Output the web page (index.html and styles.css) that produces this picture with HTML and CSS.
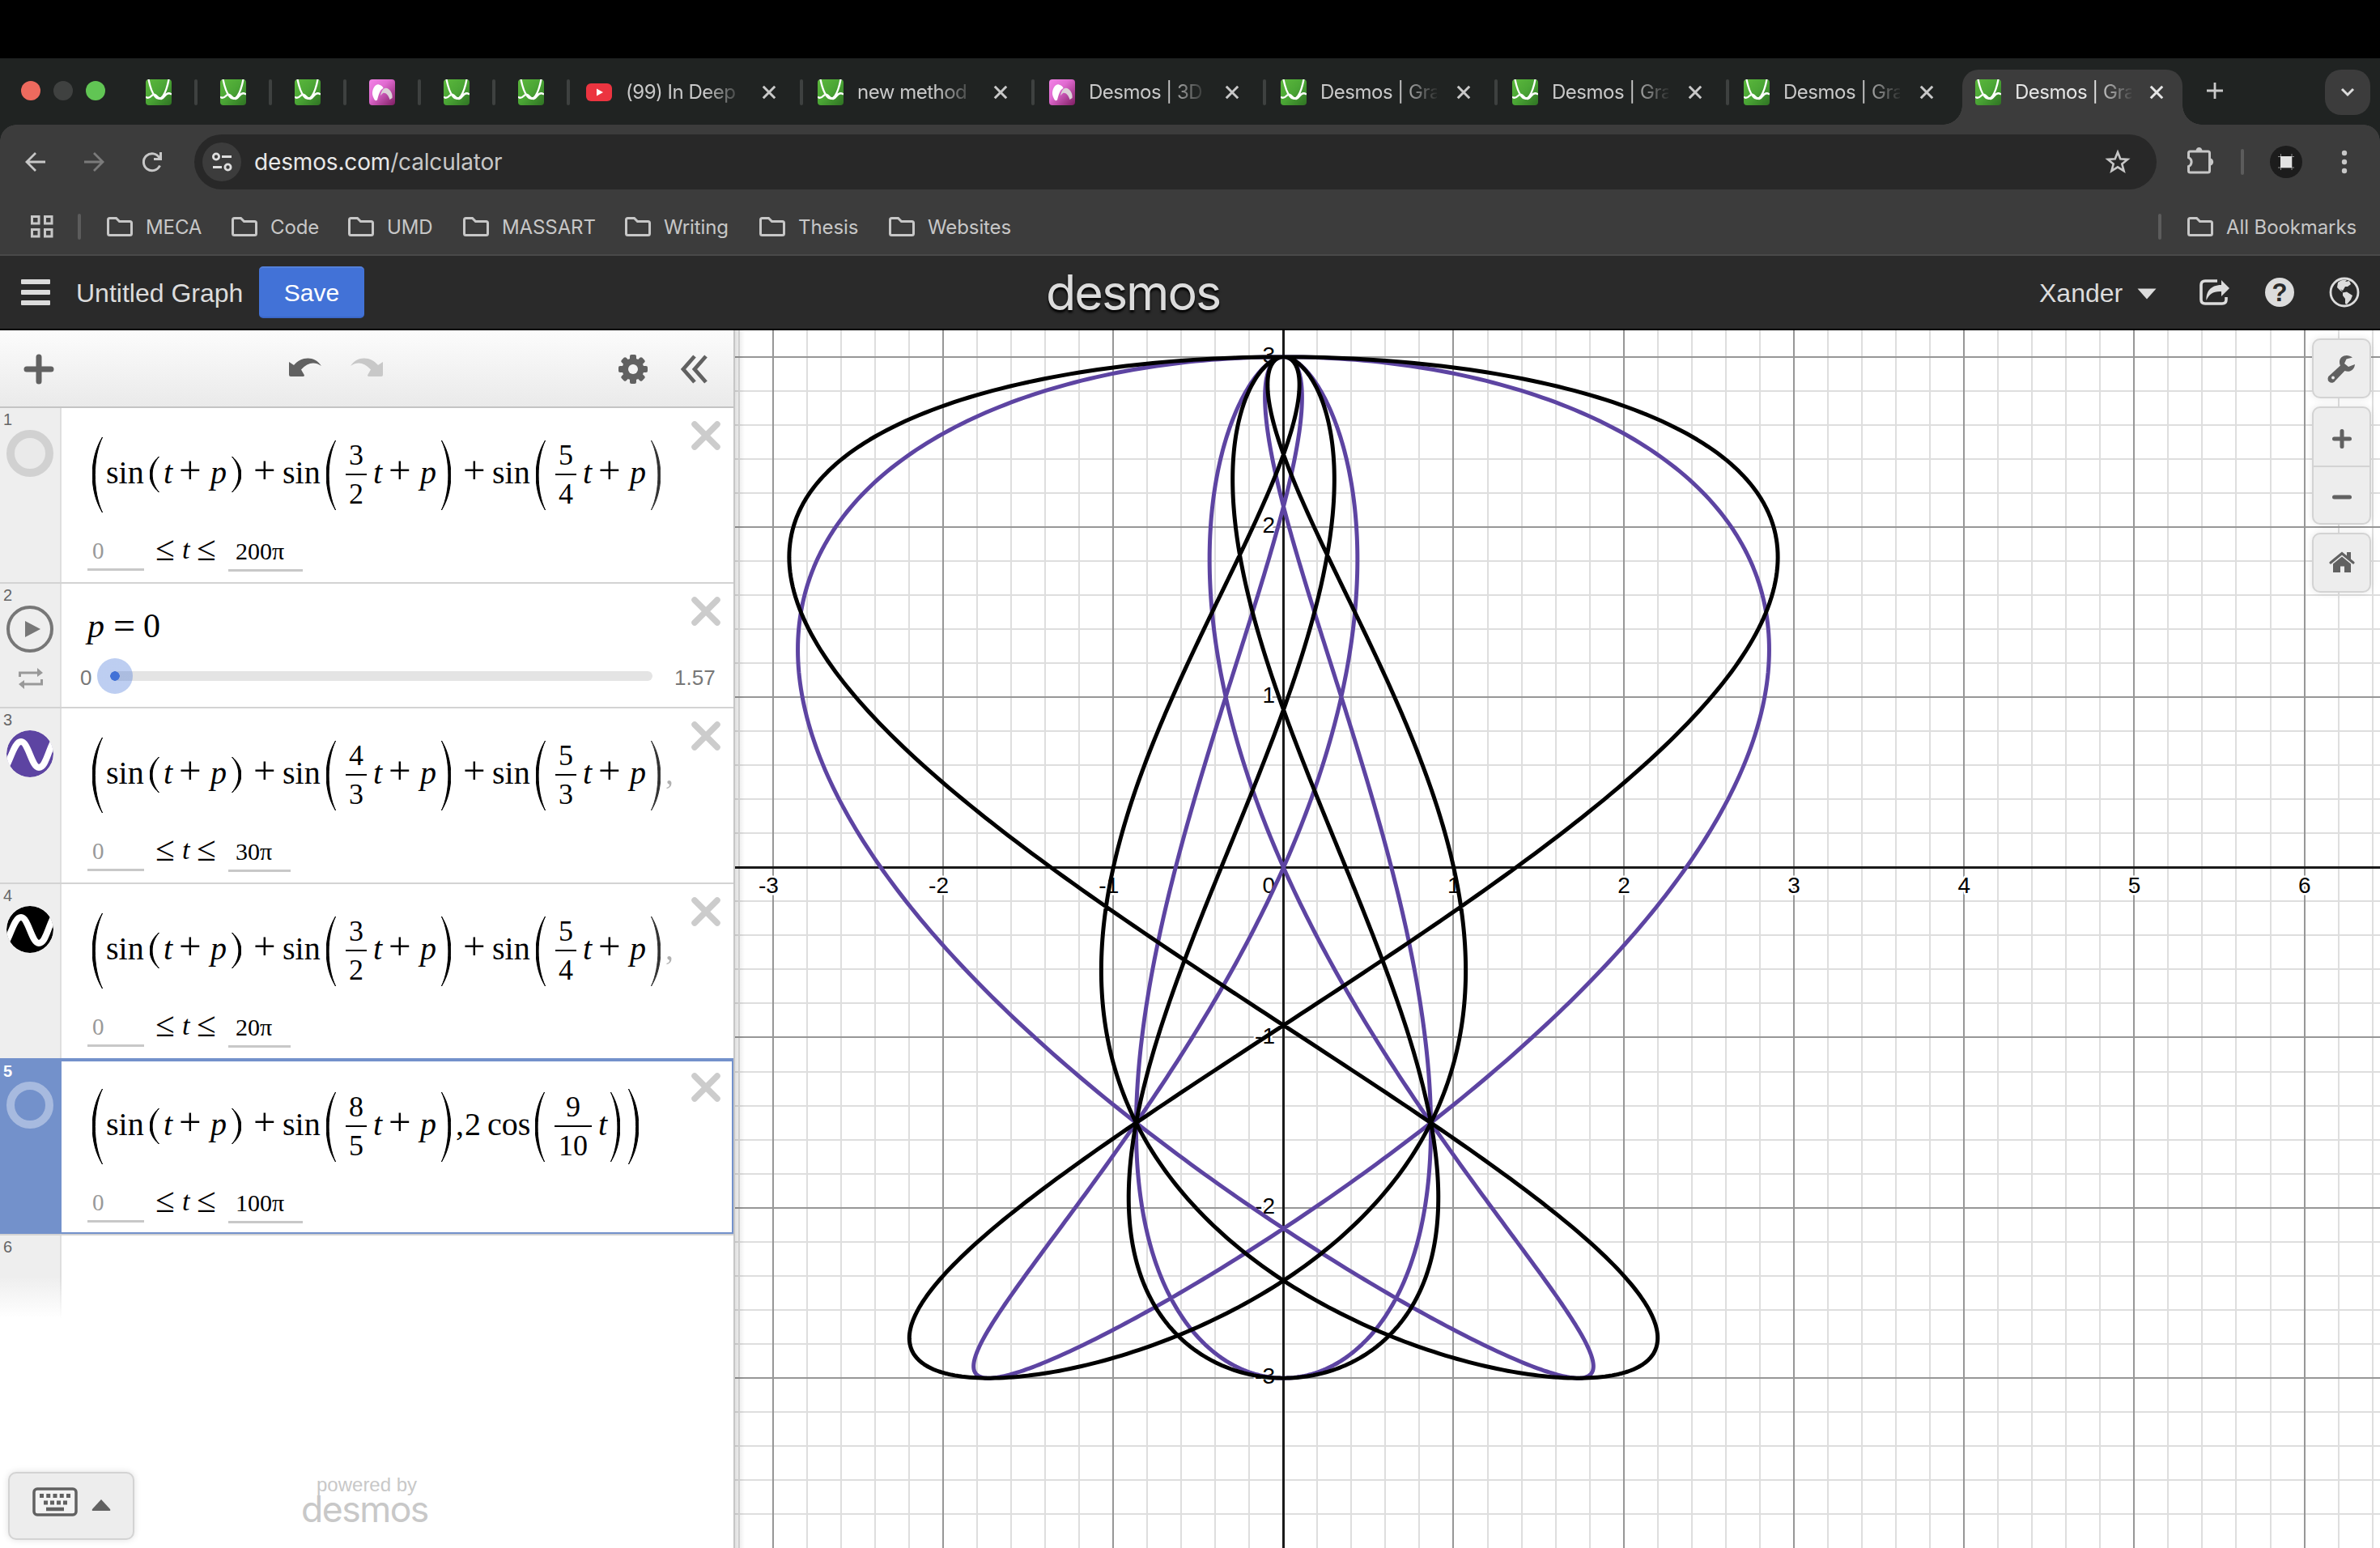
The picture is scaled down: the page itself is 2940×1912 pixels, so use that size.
FILE: index.html
```html
<!DOCTYPE html>
<html lang="en">
<head>
<meta charset="utf-8">
<title>Desmos | Graphing Calculator</title>
<link rel="stylesheet" href="styles.css">
</head>
<body>
<svg class="defs" width="0" height="0" aria-hidden="true">
  <defs>
    <linearGradient id="green" x1="0" y1="0" x2="1" y2="1"><stop offset="0" stop-color="#5cb83c"/><stop offset=".5" stop-color="#4aa535"/><stop offset="1" stop-color="#2f7223"/></linearGradient>
    <linearGradient id="pink" x1="0" y1="0" x2="1" y2="1"><stop offset="0" stop-color="#f283e6"/><stop offset=".4" stop-color="#e06ad0"/><stop offset="1" stop-color="#7e1d62"/></linearGradient>
    <symbol id="fav-graph" viewBox="0 0 32 32"><rect width="32" height="32" rx="4" fill="url(#green)"/><path d="M3.500 0C5.500 10 8 17 11.500 21C14.500 25 18.500 25 21.500 20.500C25 15 27 8 28.500 0M0 21.500C2 23.500 4.500 23 7 20.500C9.500 17.500 11.500 18 14.500 21.500C18 25.500 20.500 24.500 23.500 20.500C26 17 29 16.500 32 18.500" fill="none" stroke="#fff" stroke-width="2.300"/></symbol>
    <symbol id="fav-3d" viewBox="0 0 32 32"><rect width="32" height="32" rx="4" fill="url(#pink)"/><path d="M14 20C16 11 20 9 24 12C28 15 29 20 28.500 23L25.500 25C23.500 19 20.500 16 17 17Z" fill="#dcd3d8"/><path d="M4 16C5 9 9 5.500 12 6.500C15 7 17 9 17.500 11C13 13 11.500 20 10 25.500C9 26.500 7.500 26.500 6.500 25C5 22 3.600 19 4 16Z" fill="#fff"/></symbol>
    <symbol id="fav-yt" viewBox="0 0 32 22"><rect width="32" height="22" rx="6" fill="#ec3440"/><path d="M13 6.500L21 11L13 15.500Z" fill="#fff"/></symbol>
    <symbol id="i-x" viewBox="0 0 18 18"><path d="M1.800 1.800L16.200 16.200M16.200 1.800L1.800 16.200" fill="none" stroke="currentColor" stroke-width="3"/></symbol>
    <symbol id="i-folder" viewBox="0 0 32 24"><path d="M1.500 3.500Q1.500 1.500 3.500 1.500H11.500L15.500 5.500H28.500Q30.500 5.500 30.500 7.500V20.500Q30.500 22.500 28.500 22.500H3.500Q1.500 22.500 1.500 20.500Z" fill="none" stroke="currentColor" stroke-width="3"/></symbol>
    <symbol id="i-del" viewBox="0 0 36 36"><path d="M4 4L32 32M32 4L4 32" fill="none" stroke="#ccc" stroke-width="7.500" stroke-linecap="round"/></symbol>
    <symbol id="i-wave" viewBox="0 0 58 58"><clipPath id="disc"><circle cx="29" cy="29" r="29"/></clipPath><g clip-path="url(#disc)"><circle cx="29" cy="29" r="29" fill="currentColor"/><path d="M-1 46C6 34 10 14 18 14C27 14 31 46 40 46C48 46 50 30 58 14" fill="none" stroke="#fff" stroke-width="8"/></g></symbol>
    <symbol id="p-open" viewBox="0 0 13 100" preserveAspectRatio="none"><path d="M12.500 0C-4 28 -4 72 12.500 100C.300 72 .300 28 12.500 0Z" fill="#000" stroke="#000" stroke-width="1" vector-effect="non-scaling-stroke"/></symbol>
    <symbol id="p-close" viewBox="0 0 13 100" preserveAspectRatio="none"><path d="M.500 0C17 28 17 72 .500 100C12.700 72 12.700 28 .500 0Z" fill="#000" stroke="#000" stroke-width="1" vector-effect="non-scaling-stroke"/></symbol>
  </defs>
</svg>

<div class="notch"></div>
<div class="tabstrip">
  <div class="lights"><i class="red"></i><i class="grey"></i><i class="green"></i></div>
  <div class="pinned"><svg class="fav"><use href="#fav-graph"/></svg></div>
  <div class="pinned"><svg class="fav"><use href="#fav-graph"/></svg></div>
  <div class="pinned"><svg class="fav"><use href="#fav-graph"/></svg></div>
  <div class="pinned"><svg class="fav"><use href="#fav-3d"/></svg></div>
  <div class="pinned"><svg class="fav"><use href="#fav-graph"/></svg></div>
  <div class="pinned"><svg class="fav"><use href="#fav-graph"/></svg></div>
  <div class="tab"><svg class="fav"><use href="#fav-yt"/></svg><span class="name">(99) In Deep</span><svg class="x"><use href="#i-x"/></svg></div>
  <div class="tab"><svg class="fav"><use href="#fav-graph"/></svg><span class="name">new method</span><svg class="x"><use href="#i-x"/></svg></div>
  <div class="tab"><svg class="fav"><use href="#fav-3d"/></svg><span class="name">Desmos | 3D</span><svg class="x"><use href="#i-x"/></svg></div>
  <div class="tab"><svg class="fav"><use href="#fav-graph"/></svg><span class="name">Desmos | Gra</span><svg class="x"><use href="#i-x"/></svg></div>
  <div class="tab"><svg class="fav"><use href="#fav-graph"/></svg><span class="name">Desmos | Gra</span><svg class="x"><use href="#i-x"/></svg></div>
  <div class="tab last"><svg class="fav"><use href="#fav-graph"/></svg><span class="name">Desmos | Gra</span><svg class="x"><use href="#i-x"/></svg></div>
  <div class="tab active"><svg class="fav"><use href="#fav-graph"/></svg><span class="name">Desmos | Gra</span><svg class="x"><use href="#i-x"/></svg></div>
  <svg class="newtab" viewBox="0 0 20 20"><path d="M10 0V20M0 10H20" stroke="#c9c9c9" stroke-width="2.800"/></svg>
  <div class="tabmenu"><svg width="18" height="12" viewBox="0 0 18 12"><path d="M2 2L9 9L16 2" fill="none" stroke="#dcdcdc" stroke-width="3"/></svg></div>
</div>

<div class="chrome">
  <div class="toolbar">
    <svg class="nav" viewBox="0 0 28 28"><path d="M26 14H3M14 3L3 14L14 25" fill="none" stroke="#c7c7c7" stroke-width="2.800"/></svg>
    <svg class="nav" viewBox="0 0 28 28"><path d="M2 14H25M14 3L25 14L14 25" fill="none" stroke="#7b7b7b" stroke-width="2.800"/></svg>
    <svg class="nav" viewBox="0 0 28 28"><path d="M23.500 18.500A10.500 10.500 0 1 1 23 9M24.500 2V10.500H16" fill="none" stroke="#c7c7c7" stroke-width="3"/></svg>
    <div class="omnibox">
      <div class="tune"><svg width="26" height="24" viewBox="0 0 26 24"><g fill="none" stroke="#dedede" stroke-width="2.800"><circle cx="6" cy="5.500" r="3.600"/><path d="M13 5.500H25M2 18.500H13"/><circle cx="20.500" cy="18.500" r="3.600"/></g></svg></div>
      <div class="url"><b>desmos.com</b>/calculator</div>
      <svg class="star" viewBox="0 0 32 32"><path d="M16 4L19.300 12.300L28.200 12.900L21.300 18.500L23.600 27.200L16 22.400L8.400 27.200L10.700 18.500L3.800 12.900L12.700 12.300Z" fill="none" stroke="#c7c7c7" stroke-width="2.600"/></svg>
    </div>
    <svg class="puzzle" viewBox="0 0 34 34"><path d="M4.500 6H26.500Q28.500 6 28.500 8V30Q28.500 32 26.500 32H4.500Q2.500 32 2.500 30V24.500A6 6 0 0 0 2.500 13.500V8Q2.500 6 4.500 6Z" fill="none" stroke="#c7c7c7" stroke-width="3"/><path d="M11.500 5.500A4 4.500 0 0 1 19.500 5.500ZM29 14.500A4 4.300 0 0 1 29 23.500Z" fill="#c7c7c7"/></svg>
    <i class="sep s1"></i>
    <svg class="avatar" viewBox="0 0 40 40"><circle cx="20" cy="20" r="20" fill="#1c1c1c"/><path d="M10 13.500H30M10 27H30M13.500 10V30M27 10V30" stroke="#8d8d8d" stroke-width="1"/><rect x="13" y="13" width="14" height="14" fill="#e2e2e2"/></svg>
    <svg class="dots" viewBox="0 0 8 30"><g fill="#c7c7c7"><circle cx="4" cy="4" r="3.200"/><circle cx="4" cy="15" r="3.200"/><circle cx="4" cy="26" r="3.200"/></g></svg>
  </div>
  <div class="bookmarks">
    <svg class="apps" viewBox="0 0 28 28"><g fill="none" stroke="#c7c7c7" stroke-width="3"><rect x="1.500" y="1.500" width="8.500" height="8.500"/><rect x="17.500" y="1.500" width="8.500" height="8.500"/><rect x="1.500" y="17.500" width="8.500" height="8.500"/><rect x="17.500" y="17.500" width="8.500" height="8.500"/></g></svg>
    <i class="sep s2"></i>
    <div class="bm w1"><svg><use href="#i-folder"/></svg><span>MECA</span></div>
    <div class="bm w2"><svg><use href="#i-folder"/></svg><span>Code</span></div>
    <div class="bm w3"><svg><use href="#i-folder"/></svg><span>UMD</span></div>
    <div class="bm w4"><svg><use href="#i-folder"/></svg><span>MASSART</span></div>
    <div class="bm w5"><svg><use href="#i-folder"/></svg><span>Writing</span></div>
    <div class="bm w6"><svg><use href="#i-folder"/></svg><span>Thesis</span></div>
    <div class="bm w7"><svg><use href="#i-folder"/></svg><span>Websites</span></div>
    <i class="sep s3"></i>
    <div class="bm all"><svg><use href="#i-folder"/></svg><span>All Bookmarks</span></div>
  </div>
</div>

<header class="header">
  <div class="menu"><i></i><i></i><i></i></div>
  <div class="title">Untitled Graph</div>
  <div class="save">Save</div>
  <div class="logo">desmos</div>
  <div class="user">Xander</div>
  <svg class="caret" viewBox="0 0 24 14"><path d="M.5 .5H23.500L12 13.500Z" fill="#dcdcdc"/></svg>
  <svg class="share" viewBox="0 0 38 32"><path d="M22 2H7Q2 2 2 7V25Q2 30 7 30H28Q33 30 33 25V22" fill="none" stroke="#dcdcdc" stroke-width="3.600"/><path d="M27 1L37 11L27 21V15C17 14.500 12 18 8.500 26C8 16 13 7 27 7Z" fill="#dcdcdc"/></svg>
  <div class="help">?</div>
  <svg class="globe" viewBox="0 0 38 38"><circle cx="19" cy="19" r="17" fill="none" stroke="#dcdcdc" stroke-width="2.800"/><path d="M11 7C14 4 18 3 22 4L20 6L25 5L27 9L23 12L20 12L17 17L14 15L17 19L14 17L10 13Z" fill="#dcdcdc"/><path d="M17 19.500L22 18.500L29 23L27 28L22 34L20 33L20 27L17 23Z" fill="#dcdcdc"/></svg>
</header>

<main class="app">
  <aside class="panel">
    <div class="ptools">
      <svg class="add" viewBox="0 0 36 36"><path d="M18 3V33M3 18H33" stroke="#616161" stroke-width="7" stroke-linecap="round"/></svg>
      <svg class="undo" viewBox="0 0 42 24"><path d="M1 5L7 9C15 -1 32 -4 41 10C32 4 24 6 16 14.500L20 21.500Q20 23 18 23H3Q1 23 1 21Z" fill="#616161"/></svg>
      <svg class="redo" viewBox="0 0 42 24"><path d="M41 5L35 9C27 -1 10 -4 1 10C10 4 18 6 26 14.500L22 21.500Q22 23 24 23H39Q41 23 41 21Z" fill="#c8c8c8"/></svg>
      <svg class="gear" viewBox="-18 -18 36 36"><g fill="#616161"><rect x="-4" y="-18" width="8" height="36" rx="2"/><rect x="-4" y="-18" width="8" height="36" rx="2" transform="rotate(45)"/><rect x="-4" y="-18" width="8" height="36" rx="2" transform="rotate(90)"/><rect x="-4" y="-18" width="8" height="36" rx="2" transform="rotate(135)"/><circle r="13.500"/></g><circle r="6" fill="#f3f3f3"/></svg>
      <svg class="hide" viewBox="0 0 34 36"><path d="M17 2L3 18L17 34M31 2L17 18L31 34" fill="none" stroke="#616161" stroke-width="4.800"/></svg>
    </div>

    <div class="row">
      <div class="gutter"><span class="num">1</span><div class="ring"></div></div>
      <div class="cell">
        <svg class="del"><use href="#i-del"/></svg>
        <div class="math">
          <svg class="par big"><use href="#p-open"/></svg><span class="fn">sin</span><svg class="par sm"><use href="#p-open"/></svg><i class="t">t</i><span class="op">+</span><i class="p">p</i><svg class="par sm c"><use href="#p-close"/></svg><span class="op out">+</span><span class="fn f2">sin</span><svg class="par md"><use href="#p-open"/></svg><span class="frac"><span>3</span><span>2</span></span><i class="t ft">t</i><span class="op">+</span><i class="p">p</i><svg class="par md c"><use href="#p-close"/></svg><span class="op out">+</span><span class="fn f2">sin</span><svg class="par md"><use href="#p-open"/></svg><span class="frac"><span>5</span><span>4</span></span><i class="t ft">t</i><span class="op">+</span><i class="p">p</i><svg class="par md c fade"><use href="#p-close"/></svg>
        </div>
        <div class="range"><span class="lo">0</span><span class="le">≤</span><i>t</i><span class="le">≤</span><span class="hi">200π</span></div>
      </div>
    </div>

    <div class="row slider-row">
      <div class="gutter"><span class="num">2</span>
        <svg class="play" viewBox="0 0 58 58"><circle cx="29" cy="29" r="27" fill="none" stroke="#777" stroke-width="4"/><path d="M23 19L42 29L23 39Z" fill="#777"/></svg>
        <svg class="loop" viewBox="0 0 30 26"><path d="M1.500 11V6H24M28.500 14V20H6" fill="none" stroke="#999" stroke-width="3"/><path d="M23 0L30 6L23 11ZM7 15L0 20L7 26Z" fill="#999"/></svg>
      </div>
      <div class="cell">
        <svg class="del"><use href="#i-del"/></svg>
        <div class="assign"><i>p</i><span class="eq">=</span><span>0</span></div>
        <div class="slider"><span class="min">0</span><div class="track"><div class="thumb"></div></div><span class="max">1.57</span></div>
      </div>
    </div>

    <div class="row">
      <div class="gutter"><span class="num">3</span><svg class="wave purple"><use href="#i-wave"/></svg></div>
      <div class="cell">
        <svg class="del"><use href="#i-del"/></svg>
        <div class="math">
          <svg class="par big"><use href="#p-open"/></svg><span class="fn">sin</span><svg class="par sm"><use href="#p-open"/></svg><i class="t">t</i><span class="op">+</span><i class="p">p</i><svg class="par sm c"><use href="#p-close"/></svg><span class="op out">+</span><span class="fn f2">sin</span><svg class="par md"><use href="#p-open"/></svg><span class="frac"><span>4</span><span>3</span></span><i class="t ft">t</i><span class="op">+</span><i class="p">p</i><svg class="par md c"><use href="#p-close"/></svg><span class="op out">+</span><span class="fn f2">sin</span><svg class="par md"><use href="#p-open"/></svg><span class="frac"><span>5</span><span>3</span></span><i class="t ft">t</i><span class="op">+</span><i class="p">p</i><svg class="par md c fade"><use href="#p-close"/></svg><span class="comma faint">,</span>
        </div>
        <div class="range"><span class="lo">0</span><span class="le">≤</span><i>t</i><span class="le">≤</span><span class="hi">30π</span></div>
      </div>
    </div>

    <div class="row noline">
      <div class="gutter"><span class="num">4</span><svg class="wave black"><use href="#i-wave"/></svg></div>
      <div class="cell">
        <svg class="del"><use href="#i-del"/></svg>
        <div class="math">
          <svg class="par big"><use href="#p-open"/></svg><span class="fn">sin</span><svg class="par sm"><use href="#p-open"/></svg><i class="t">t</i><span class="op">+</span><i class="p">p</i><svg class="par sm c"><use href="#p-close"/></svg><span class="op out">+</span><span class="fn f2">sin</span><svg class="par md"><use href="#p-open"/></svg><span class="frac"><span>3</span><span>2</span></span><i class="t ft">t</i><span class="op">+</span><i class="p">p</i><svg class="par md c"><use href="#p-close"/></svg><span class="op out">+</span><span class="fn f2">sin</span><svg class="par md"><use href="#p-open"/></svg><span class="frac"><span>5</span><span>4</span></span><i class="t ft">t</i><span class="op">+</span><i class="p">p</i><svg class="par md c fade"><use href="#p-close"/></svg><span class="comma faint">,</span>
        </div>
        <div class="range"><span class="lo">0</span><span class="le">≤</span><i>t</i><span class="le">≤</span><span class="hi">20π</span></div>
      </div>
    </div>

    <div class="row selected">
      <div class="gutter"><span class="num">5</span><div class="ring"></div></div>
      <div class="cell">
        <svg class="del"><use href="#i-del"/></svg>
        <div class="math">
          <svg class="par big"><use href="#p-open"/></svg><span class="fn">sin</span><svg class="par sm"><use href="#p-open"/></svg><i class="t">t</i><span class="op">+</span><i class="p">p</i><svg class="par sm c"><use href="#p-close"/></svg><span class="op out">+</span><span class="fn f2">sin</span><svg class="par md"><use href="#p-open"/></svg><span class="frac"><span>8</span><span>5</span></span><i class="t ft">t</i><span class="op">+</span><i class="p">p</i><svg class="par md c"><use href="#p-close"/></svg><span class="comma">,</span><span class="two">2</span><span class="cos">cos</span><svg class="par md"><use href="#p-open"/></svg><span class="frac wide"><span>9</span><span>10</span></span><i class="t ft">t</i><svg class="par md c2"><use href="#p-close"/></svg><svg class="par big"><use href="#p-close"/></svg>
        </div>
        <div class="range"><span class="lo">0</span><span class="le">≤</span><i>t</i><span class="le">≤</span><span class="hi">100π</span></div>
      </div>
    </div>

    <div class="row empty"><div class="gutter"><span class="num">6</span></div></div>

    <div class="pfoot">
      <div class="keypad">
        <svg width="56" height="36" viewBox="0 0 56 36"><rect x="2" y="2" width="52" height="32" rx="4" fill="#f3f3f3" stroke="#616161" stroke-width="3.500"/><path d="M9 10.500H47" stroke="#616161" stroke-width="5" stroke-dasharray="5 3.250"/><path d="M14 19H43" stroke="#616161" stroke-width="5" stroke-dasharray="5 3"/><path d="M17 27H39" stroke="#616161" stroke-width="4.500"/></svg>
        <svg class="up" width="24" height="14" viewBox="0 0 24 14"><path d="M12 0L23 12Q24 14 22 14H2Q0 14 1 12Z" fill="#616161"/></svg>
      </div>
      <div class="powered"><span>powered by</span><span class="mini">desmos</span></div>
    </div>
  </aside>

  <section class="graph">
    <svg id="plot" width="2032" height="1504" viewBox="908 408 2032 1504"></svg>
    <div class="controls">
      <div class="btn"><svg width="34" height="34" viewBox="0 0 34 34"><path d="M30 3.500C24 -1.500 14 1 14 9C14 11 14.500 12.500 15 13.500L2 25.500A5 5 0 1 0 9 32L20.500 20C26 22.500 32.500 19 33 12L25 15L20 11L22.500 5.500Z" fill="#616161"/><circle cx="6" cy="28.500" r="1.900" fill="#ededed"/></svg></div>
      <div class="zoom">
        <div><svg width="24" height="24" viewBox="0 0 24 24"><path d="M12 2.500V21.500M2.500 12H21.500" stroke="#616161" stroke-width="5" stroke-linecap="round"/></svg></div>
        <div><svg width="24" height="24" viewBox="0 0 24 24"><path d="M2.500 12H21.500" stroke="#616161" stroke-width="5" stroke-linecap="round"/></svg></div>
      </div>
      <div class="btn"><svg width="32" height="28" viewBox="0 0 32 28"><path d="M2 14L16 2.500L30 14" fill="none" stroke="#616161" stroke-width="3.200" stroke-linecap="round"/><path d="M22 1H27V11L22 6.500ZM16 6.500L27 15.500V26H19V18.500H14V26H5V15.500Z" fill="#616161"/></svg></div>
    </div>
  </section>
</main>
<script src="app.js"></script>
</body>
</html>
```
FILE: styles.css
```css
* { box-sizing: border-box; }
body { margin: 0; width: 2940px; height: 1912px; overflow: hidden; background: #fff; font-family: Inter, "Liberation Sans", sans-serif; display: flex; flex-direction: column; }
svg { display: block; flex: none; overflow: visible; }
.defs { position: absolute; }
.notch { height: 72px; background: #000; flex: none; }

.tabstrip { height: 82px; flex: none; background: #202322; display: flex; align-items: flex-start; padding: 14px 12px 0 26px; }
.lights { display: flex; gap: 16px; width: 154px; height: 56px; align-items: center; }
.lights i { width: 24px; height: 24px; border-radius: 50%; margin-top: -4px; }
.lights .red { background: #ed6a5e; }
.lights .grey { background: #3f4140; }
.lights .green { background: #61c554; }
.fav { width: 32px; height: 32px; }
.pinned, .tab { position: relative; display: flex; align-items: center; height: 32px; margin-top: 12px; }
.pinned { width: 92px; }
.pinned::after, .tab::after { content: ""; width: 4px; height: 32px; border-radius: 2px; background: #3e4140; }
.pinned::after { margin-left: 28px; }
.tab { width: 286px; }
.tab:nth-child(8) { margin-left: -8px; }
.name { width: 144px; margin-left: 17px; font-size: 24px; letter-spacing: -.5px; line-height: 32px; color: #c9c9c9; white-space: nowrap; overflow: hidden; -webkit-mask-image: linear-gradient(90deg, #000 98px, transparent 148px); mask-image: linear-gradient(90deg, #000 98px, transparent 148px); }
.x { width: 18px; height: 18px; margin-left: 24px; color: #c9c9c9; }
.tab::after { margin-left: 29px; }
.last::after, .active::after { background: none; }
.active { width: 272px; height: 68px; margin: 0 0 0 -16px; padding: 0 0 12px 16px; background: #3c3c3c; border-radius: 20px 20px 0 0; }
.active .name { color: #e6e6e6; }
.active .x { color: #e6e6e6; margin-left: 22px; }
.active::before, .active::after { content: ""; position: absolute; bottom: 0; width: 24px; height: 24px; margin: 0; border-radius: 0; }
.active::before { left: -24px; background: radial-gradient(circle at 0 0, #202322 23.5px, #3c3c3c 24px); }
.active::after { right: -24px; background: radial-gradient(circle at 100% 0, #202322 23.5px, #3c3c3c 24px); }
.newtab { width: 20px; height: 20px; margin: 16px 0 0 30px; }
.tabmenu { width: 56px; height: 56px; margin-left: auto; border-radius: 20px; background: #3c3c3c; display: flex; align-items: center; justify-content: center; }

.chrome { height: 162px; flex: none; border-bottom: 2px solid #494949; background: radial-gradient(circle at 20px 20px, #3c3c3c 19.5px, #202322 20px) 0 0 / 20px 20px no-repeat, radial-gradient(circle at 0 20px, #3c3c3c 19.5px, #202322 20px) 100% 0 / 20px 20px no-repeat, #3c3c3c; }
.toolbar { display: flex; align-items: center; height: 92px; padding: 0 40px 0 30px; }
.nav { width: 28px; height: 28px; margin-right: 44px; }
.omnibox { width: 2424px; height: 68px; margin-left: -6px; background: #282828; border-radius: 34px; display: flex; align-items: center; padding: 0 32px 0 10px; }
.tune { width: 48px; height: 48px; border-radius: 50%; background: #3c3c3c; display: flex; align-items: center; justify-content: center; }
.url { margin-left: 16px; font-size: 28px; color: #c7c7c7; flex: 1; letter-spacing: -.16px; }
.url b { font-weight: 400; color: #e8e8e8; }
.star { width: 32px; height: 32px; }
.puzzle { width: 34px; height: 34px; margin: -4px 0 0 37px; }
.sep { width: 4px; height: 32px; border-radius: 2px; background: #5c5c5c; }
.s1 { margin-left: 33px; }
.avatar { width: 40px; height: 40px; margin-left: 32px; }
.dots { width: 8px; height: 30px; margin-left: 48px; }
.bookmarks { display: flex; align-items: center; height: 68px; padding: 0 0 0 38px; color: #c7c7c7; font-size: 24px; letter-spacing: -.1px; }
.apps { width: 28px; height: 28px; }
.s2 { margin: 0 32px 0 30px; }
.bm { display: flex; align-items: center; gap: 16px; white-space: nowrap; }
.bm svg { width: 32px; height: 24px; }
.w1 { width: 154px; } .w2 { width: 144px; } .w3 { width: 142px; } .w4 { width: 200px; } .w5 { width: 166px; } .w6 { width: 160px; }
.s3 { margin-left: auto; margin-right: 32px; }
.all { width: 238px; }

.header { height: 92px; flex: none; background: #2a2a2a; border-bottom: 2px solid #000; display: flex; align-items: center; color: #dcdcdc; font-family: "Liberation Sans", Arial, sans-serif; font-size: 32px; padding: 0 24px 0 26px; }
.header > * { flex: none; }
.menu { width: 36px; display: flex; flex-direction: column; gap: 7px; margin-top: -1px; }
.menu i { height: 6px; border-radius: 1px; background: #dcdcdc; }
.title { margin-left: 32px; width: 226px; padding-top: 3px; white-space: nowrap; }
.save { width: 130px; height: 64px; border-radius: 5px; background: #4272d7; border-top: 2px solid #5480da; border-bottom: 2px solid #3b68c8; color: #fff; font-size: 30px; text-align: center; line-height: 62px; margin-top: -1px; }
.logo { margin: -1px 0 0 842px; width: 220px; font-family: Inter, sans-serif; font-weight: 400; font-size: 61px; letter-spacing: -2px; line-height: 60px; text-shadow: 0 3px 3px #000; }
.user { margin-left: 1007px; padding-top: 3px; width: 105px; white-space: nowrap; }
.caret { width: 24px; height: 14px; margin: 4px 0 0 16px; }
.share { width: 38px; height: 32px; margin: -1px 0 0 53px; }
.help { width: 36px; height: 36px; margin-left: 43px; border-radius: 50%; background: #dcdcdc; color: #2a2a2a; font-weight: 700; font-size: 31px; line-height: 37px; text-align: center; }
.globe { width: 38px; height: 38px; margin-left: 43px; }

.app { flex: 1; display: flex; min-height: 0; }
.panel { width: 908px; border-right: 2px solid #c6c6c6; background: #fff; display: flex; flex-direction: column; flex: none; }
.ptools { height: 96px; flex: none; border-bottom: 2px solid #c4c4c4; background: linear-gradient(#fcfcfc, #eaeaea); display: flex; align-items: center; padding: 1px 0 0 30px; }
.add { width: 36px; height: 36px; }
.undo { width: 42px; height: 24px; margin: -4px 0 0 290px; }
.redo { width: 42px; height: 24px; margin: -4px 0 0 34px; }
.gear { width: 36px; height: 36px; margin-left: 290px; }
.hide { width: 34px; height: 36px; margin-left: 41px; }

.row { height: 217px; flex: none; display: flex; border-bottom: 2px solid #d3d3d3; }
.gutter { width: 76px; flex: none; background: #eee; border-right: 2px solid #dedede; padding: 2px 0 0 4px; font-family: "Liberation Sans", Arial, sans-serif; }
.num { display: block; font-size: 20px; line-height: 25px; color: #666; }
.ring, .wave, .play { width: 58px; height: 58px; margin-left: 4px; }
.ring { border: 10px solid #d1d1d1; border-radius: 50%; background: #eaeaea; }
.purple { color: #5d44a2; }
.black { color: #000; }
.loop { width: 30px; height: 26px; margin: 19px 0 0 19px; }
.cell { flex: 1; position: relative; padding-left: 1px; }
.del { position: absolute; right: 16px; top: 16px; width: 36px; height: 36px; }
.math { display: flex; height: 162px; padding: 2px 0 0 37px; align-items: center; font-family: "Liberation Serif", "Times New Roman", serif; font-size: 40px; color: #000; white-space: nowrap; }
.math span, .math i { line-height: 156px; height: 160px; }
.par { width: 13px; }
.par.big { height: 93px; margin-top: 1px; }
.par.md { height: 86px; margin-top: 1px; width: 12px; }
.par.sm { height: 44px; margin-top: -1px; width: 12px; }
.fn { margin-left: 4px; width: 49px; }
.f2 { margin-left: 10px; width: 54px; }
.math .sm:not(.c) { margin-left: 5px; margin-right: 5px; }
.t { width: 19px; }
.math .op { width: 35px; font-size: 49px; line-height: 150px; }
.p { width: 28px; padding-left: 4px; }
.math .c { margin-left: 2px; }
.math .op.out { width: 26px; margin-left: 15px; }
.math .frac { display: flex; flex-direction: column; width: 26px; height: 160px; margin-left: 12px; text-align: center; font-size: 36px; justify-content: center; }
.math .frac span { height: 43px; line-height: 46px; }
.math .frac span:first-child { border-bottom: 2px solid #000; height: 44px; line-height: 39px; }
.frac + .ft { margin-left: 8px; width: 19px; }
.comma { width: 11px; margin-left: 6px; }
.faint { opacity: .3; }
.fade { opacity: .8; }
.two { width: 28px; }
.cos { width: 59px; }
.math .frac.wide { width: 46px; }
.c2 { margin-right: 10px; margin-left: -4px; }

.range { display: flex; height: 60px; margin-top: -21px; padding-left: 31px; font-family: "Liberation Serif", "Times New Roman", serif; font-size: 29px; }
.lo { width: 70px; height: 60px; padding-left: 6px; border-bottom: 3px solid #c8c8c8; color: #999; line-height: 71px; margin-right: 14px; }
.le { width: 28px; font-size: 43px; line-height: 66px; }
.range i { width: 23px; padding-left: 5px; font-size: 34px; line-height: 67px; }
.hi { margin-left: 11px; padding: 0 23px 0 9px; height: 61px; border-bottom: 3px solid #c8c8c8; font-size: 30px; line-height: 71px; }

.slider-row { height: 154px; }
.assign { display: flex; padding: 29px 0 0 31px; font-family: "Liberation Serif", "Times New Roman", serif; font-size: 42px; line-height: 46px; }
.assign .eq { font-size: 48px; margin: 0 10px 0 11px; }
.slider { display: flex; align-items: center; margin-top: 17px; padding-left: 21px; height: 44px; font-family: "Liberation Sans", Arial, sans-serif; font-size: 26px; color: #777; }
.min { width: 40px; padding: 4px 0 0 1px; }
.track { width: 670px; height: 12px; border-radius: 6px; background: #e4e4e4; position: relative; margin-left: -2px; }
.thumb { position: absolute; left: -16px; top: -16px; width: 44px; height: 44px; border-radius: 50%; background: radial-gradient(circle, #4272d7 5.5px, rgba(66,114,215,.35) 6px); }
.max { margin-left: 27px; padding-top: 4px; }

.noline { border-bottom: 0; height: 215px; }
.selected { position: relative; border: solid #7391cb; border-width: 4px 2px 2px 0; box-shadow: 0 2px 0 #d3d3d3; }
.selected .gutter { background: #7391cb; border-color: #7391cb; padding-top: 0; }
.selected .num { color: #fff; font-weight: 700; }
.selected .ring { border-color: #a7badf; background: #7391cb; }
.selected .math { margin-top: -2px; }
.selected .del { top: 14px; right: 14px; }
.empty { border: 0; height: 104px; padding-top: 2px; }
.empty .gutter { background: linear-gradient(#eee 50%, #fff); border-image: linear-gradient(#dedede 50%, #fff) 1; border-left: 0; border-top: 0; border-bottom: 0; }

.pfoot { margin-top: auto; height: 104px; display: flex; padding-left: 10px; position: relative; }
.keypad { width: 156px; height: 84px; margin-top: 10px; border: 2px solid #d3d3d3; border-radius: 10px; background: #ededed; box-shadow: 0 0 8px rgba(0,0,0,.12); display: flex; padding: 17px 0 0 28px; gap: 17px; }
.up { margin-top: 15px; }
.powered { margin-left: 206px; width: 162px; padding-top: 12px; color: #c8c8c8; font-family: "Liberation Sans", Arial, sans-serif; font-size: 24px; line-height: 28px; display: flex; flex-direction: column; }
.powered span:first-child { padding-left: 19px; }
.powered .mini { font-family: Inter, sans-serif; font-size: 44.5px; letter-spacing: -1.5px; line-height: 33px; }

.graph { position: relative; width: 2032px; background: #fff; overflow: hidden; }
.graph::before { content: ""; position: absolute; left: 0; top: 0; bottom: 0; width: 12px; background: linear-gradient(90deg, rgba(0,0,0,.12), transparent); }
.controls { position: absolute; right: 11px; top: 10px; width: 73px; display: flex; flex-direction: column; gap: 10px; }
.btn, .zoom { border: 2px solid #d3d3d3; border-radius: 10px; background: #ededed; box-shadow: 0 0 10px rgba(0,0,0,.1); }
.btn, .zoom div { height: 74px; display: flex; align-items: center; justify-content: center; }
.zoom { height: 146px; }
.zoom div { height: 71px; padding-top: 4px; }
.zoom div + div { border-top: 2px solid #d3d3d3; }
```
FILE: app.js
```js
const NS = "http://www.w3.org/2000/svg";
const plot = document.getElementById("plot");
const OX = 1585.5, OY = 1071.5, UNIT = 210.22;

function add(tag, attrs, text) {
  const el = document.createElementNS(NS, tag);
  for (const k in attrs) el.setAttribute(k, attrs[k]);
  if (text !== undefined) el.textContent = text;
  plot.appendChild(el);
}

// grid: five minor cells per unit, snapped to whole pixels
for (const major of [false, true]) {
  let d = "";
  for (let i = -16; i <= 32; i++) {
    if (i === 0 || (i % 5 === 0) !== major) continue;
    d += `M${Math.round(OX - 0.25 + i * UNIT / 5)} 408V1912`;
  }
  for (let i = -19; i <= 15; i++) {
    if (i === 0 || (i % 5 === 0) !== major) continue;
    d += `M908 ${Math.round(OY - 0.25 - i * UNIT / 5)}H2940`;
  }
  add("path", { d, fill: "none", stroke: major ? "#979797" : "#dedede", "stroke-width": 2 });
}
add("path", { d: `M${OX} 408V1912M908 ${OY}H2940`, stroke: "#1a1a1a", "stroke-width": 3 });

const label = { "font-family": "Liberation Sans, Arial, sans-serif", "font-size": 28, fill: "#000", stroke: "#fff", "stroke-width": 5, "stroke-linejoin": "round", "paint-order": "stroke" };
for (let i = -3; i <= 6; i++) {
  if (i === 0) continue;
  add("text", { ...label, x: OX + i * UNIT - (i < 0 ? 5.5 : 0), y: 1102.5, "text-anchor": "middle" }, i);
}
add("text", { ...label, x: 1575, y: 1102.5, "text-anchor": "end" }, 0);
for (let i = -3; i <= 3; i++) {
  if (i === 0) continue;
  add("text", { ...label, x: 1575, y: OY - i * UNIT + 7, "text-anchor": "end" }, i);
}

function curve(fx, fy, end, color) {
  let d = "";
  const n = 1600;
  for (let k = 0; k <= n; k++) {
    const t = end * k / n;
    d += (k ? "L" : "M") + (OX + UNIT * fx(t)).toFixed(2) + " " + (OY - UNIT * fy(t)).toFixed(2);
  }
  add("path", { d, fill: "none", stroke: color, "stroke-width": 5, "stroke-linejoin": "round" });
}
const { sin, cos, PI } = Math;
curve(t => sin(t) + sin(4 * t / 3) + sin(5 * t / 3), t => 3 * cos(t), 6 * PI, "#5d44a2");
curve(t => sin(t) + sin(3 * t / 2) + sin(5 * t / 4), t => 3 * cos(3 * t / 4), 8 * PI, "#000");
```
